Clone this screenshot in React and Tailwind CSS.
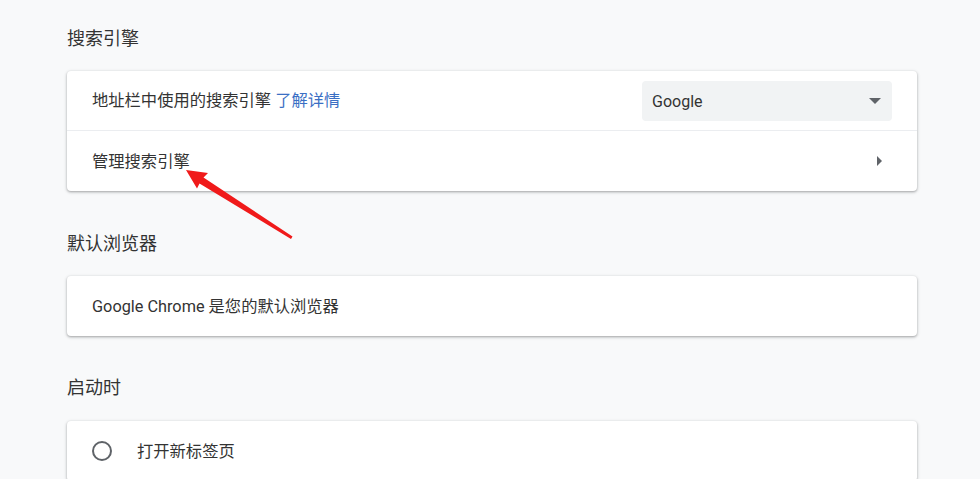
import React from "react";

const font = {
  fontFamily: '"Segoe UI", Roboto, "Noto Sans CJK SC", sans-serif',
};

// Section title above each card
const SectionTitle = ({ children, className = "" }) => (
  <h2 className={`text-[18px] leading-6 text-[#333] font-normal pt-[2px] ${className}`}>
    {children}
  </h2>
);

const Card = ({ children, className = "" }) => (
  <div
    className={`bg-white rounded-[4px] shadow-[0_1px_2px_rgba(60,64,67,0.3),0_1px_3px_1px_rgba(60,64,67,0.15)] ${className}`}
  >
    {children}
  </div>
);

const Arrow = () => (
  <svg
    className="absolute left-0 top-0 pointer-events-none"
    width="980"
    height="479"
    viewBox="0 0 980 479"
  >
    <polygon
      points="186,170 208,173 203.5,177.5 292.5,236.5 291,239 199.5,183.5 197,188.5"
      fill="#f01a1a"
    />
  </svg>
);

export default function App() {
  return (
    <div
      className="relative w-full h-[479px] overflow-hidden bg-[#f8f9fa] text-[#333]"
      style={font}
    >
      <div className="pl-[67px] pt-[25px] w-[917px]">
        <SectionTitle>搜索引擎</SectionTitle>
        <Card className="mt-5">
          <div className="h-[60px] flex items-center pl-[25px] pr-[25px] border-b border-[#ebedf0]">
            <span className="text-[16.3px] flex-1 pt-[2px]">
              地址栏中使用的搜索引擎{" "}
              <span className="text-[#3b6fc4]">了解详情</span>
            </span>
            <div className="w-[250px] h-10 rounded-[4px] bg-[#f1f3f4] flex items-center pl-[10px] pr-[11px]">
              <span className="flex-1 text-[16px] text-[#333] pt-[2px]">Google</span>
              <svg width="12" height="6" viewBox="0 0 12 6">
                <path d="M0 0h12L6 6z" fill="#5f6368" />
              </svg>
            </div>
          </div>
          <div className="h-[60px] flex items-center pl-[25px] pr-[35px]">
            <span className="text-[16.3px] flex-1 pt-[2px]">管理搜索引擎</span>
            <svg width="5" height="10" viewBox="0 0 5 10">
              <path d="M0 0l5 5-5 5z" fill="#5f6368" />
            </svg>
          </div>
        </Card>

        <SectionTitle className="mt-[39px]">默认浏览器</SectionTitle>
        <Card className="mt-5">
          <div className="h-[60px] flex items-center pl-[25px]">
            <span className="text-[16.3px] pt-[2px]">Google Chrome 是您的默认浏览器</span>
          </div>
        </Card>

        <SectionTitle className="mt-[38px]">启动时</SectionTitle>
        <Card className="mt-[21px]">
          <div className="h-[60px] flex items-center pl-[25px]">
            <span className="w-5 h-5 rounded-full border-2 border-[#5f6368]" />
            <span className="text-[16.3px] ml-[25px] pt-[2px]">打开新标签页</span>
          </div>
        </Card>
      </div>
      <Arrow />
    </div>
  );
}
